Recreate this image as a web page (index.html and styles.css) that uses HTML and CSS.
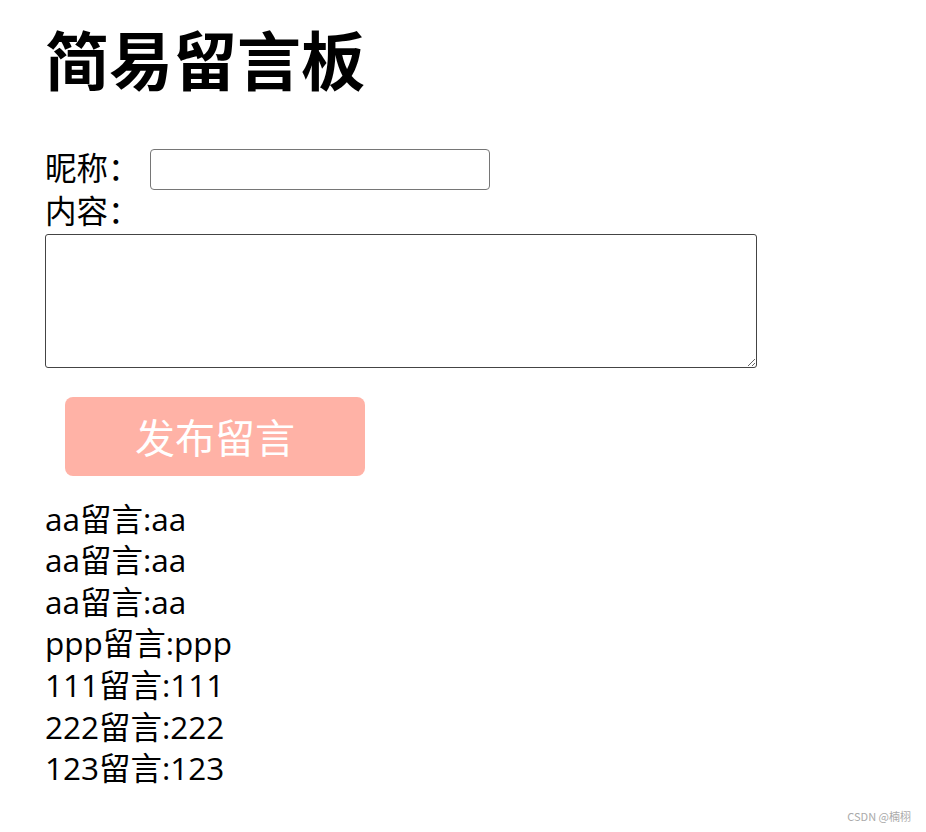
FILE: index.html
```html
<html>

<head>

    <meta name="viewport" content="width=device-width, initial-scale=1.0">

    <title>简易留言板</title>

    <link rel="stylesheet" href="styles.css">

</head>

<body>

    <div class="container">

        <h1>简易留言板</h1>

        <div class="row">
            <span class="label">昵称：</span>
            <input type="text" id="nickname">
        </div>

        <div class="label-line">内容：</div>
        <textarea id="content"></textarea>

        <button id="publishBtn">发布留言</button>

        <div class="messages">
            <div>aa留言:aa</div>
            <div>aa留言:aa</div>
            <div>aa留言:aa</div>
            <div>ppp留言:ppp</div>
            <div>111留言:111</div>
            <div>222留言:222</div>
            <div>123留言:123</div>
        </div>

    </div>

    <div class="watermark">CSDN @楠栩</div>

</body>

</html>
```

FILE: styles.css
```css
body {
    font-family: "Open Sans", "Noto Sans CJK SC", sans-serif;
    background-color: #ffffff;
    color: #000;
    margin: 0;
    padding: 0;
}

.container {
    padding: 17px 45px 0 45px;
    font-size: 31.5px;
    line-height: 41.6px;
}

h1 {
    font-family: "Noto Sans CJK SC", sans-serif;
    font-size: 64px;
    font-weight: bold;
    line-height: 80px;
    margin: 0 0 52px 0;
}

.row {
    display: flex;
    align-items: center;
    height: 41px;
}

.label {
    font-family: "Noto Sans CJK SC", sans-serif;
    margin-right: 10px;
    margin-bottom: 6px;
}

.label-line {
    font-family: "Noto Sans CJK SC", sans-serif;
    margin-top: -1px;
    margin-bottom: 3px;
}

input {
    width: 340px;
    height: 41px;
    box-sizing: border-box;
    border: 1px solid #767676;
    border-radius: 4px;
    padding: 0 6px;
    font-size: 20px;
}

textarea {
    display: block;
    width: 712px;
    height: 134px;
    box-sizing: border-box;
    border: 1.5px solid #444;
    border-radius: 3px;
    margin: 0;
}

button {
    display: block;
    width: 300px;
    height: 79px;
    margin: 29px 0 22px 20px;
    background-color: #ffb2a6;
    color: #fff;
    border: none;
    border-radius: 8px;
    font-family: "Noto Sans CJK SC", sans-serif;
    font-size: 40px;
    cursor: pointer;
}

.messages div {
    height: 41.6px;
}

.watermark {
    position: absolute;
    right: 15px;
    top: 808px;
    font-family: "Noto Sans CJK SC", sans-serif;
    font-size: 11px;
    color: #aaa;
}
```
